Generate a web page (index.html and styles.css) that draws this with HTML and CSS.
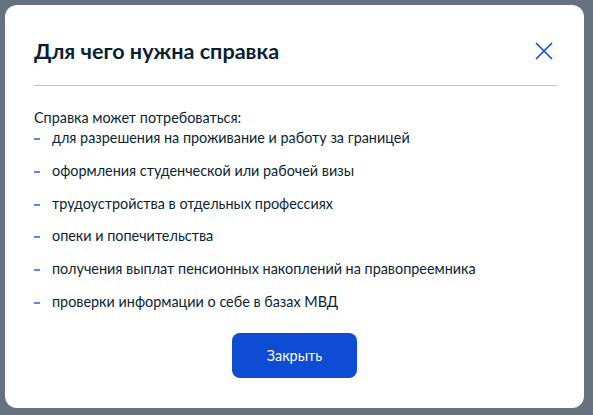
FILE: index.html
```html
<!DOCTYPE html>
<html lang="ru">
<head>
<meta charset="utf-8">
<link rel="stylesheet" href="styles.css">
</head>
<body>
<div class="modal">
  <div class="modal-head">
    <h2 class="modal-title">Для чего нужна справка</h2>
    <button class="close" aria-label="Закрыть">
      <svg width="18" height="18" viewBox="0 0 18 18"><path d="M1 1L17 17M17 1L1 17" stroke="#0d4cd3" stroke-width="1.6" fill="none"/></svg>
    </button>
  </div>
  <div class="divider"></div>
  <p class="lead">Справка может потребоваться:</p>
  <ul class="list">
    <li>для разрешения на проживание и работу за границей</li>
    <li>оформления студенческой или рабочей визы</li>
    <li>трудоустройства в отдельных профессиях</li>
    <li>опеки и попечительства</li>
    <li>получения выплат пенсионных накоплений на правопреемника</li>
    <li>проверки информации о себе в базах МВД</li>
  </ul>
  <div class="actions">
    <button class="btn">Закрыть</button>
  </div>
</div>
</body>
</html>
```
FILE: styles.css
```css
html, body { margin: 0; padding: 0; }
body {
  background: #66727f;
  font-family: Lato, "Noto Sans", sans-serif;
  color: #0b1f33;
  padding: 5px;
  height: 415px;
  box-sizing: border-box;
}
.modal {
  background: #fff;
  border-radius: 12px;
  width: 579px;
  height: 403px;
  box-sizing: border-box;
  padding: 30px 29px 0 29px;
}
.modal-head {
  display: flex;
  justify-content: space-between;
  align-items: center;
  height: 32px;
  padding-right: 2px;
}
.modal-title {
  margin: 0;
  font-size: 21.6px;
  font-weight: 700;
  line-height: 32px;
}
.close {
  border: 0;
  background: none;
  padding: 0;
  width: 18px;
  height: 18px;
  display: flex;
  cursor: pointer;
}
.divider {
  height: 1px;
  background: #b3c3ee;
  margin-top: 18px;
  margin-right: -2px;
  margin-left: 0;
}
.lead {
  margin: 22px 0 0;
  font-size: 14.4px;
  line-height: 20px;
}
.list {
  list-style: none;
  margin: 0;
  padding: 0;
}
.list li {
  position: relative;
  font-size: 14.4px;
  line-height: 20px;
  padding-left: 18px;
  margin-bottom: 12.8px;
}
.list li:last-child { margin-bottom: 0; }
.list li::before {
  content: "";
  position: absolute;
  left: 0;
  top: 10px;
  width: 6px;
  height: 2px;
  background: #5d87e6;
}
.actions {
  display: flex;
  justify-content: center;
  margin-top: 21px;
}
.btn {
  width: 125px;
  height: 45px;
  border: 0;
  border-radius: 8px;
  background: #0d4cd3;
  color: #fff;
  font-family: Lato, "Noto Sans", sans-serif;
  font-size: 14.4px;
  cursor: pointer;
}
```
